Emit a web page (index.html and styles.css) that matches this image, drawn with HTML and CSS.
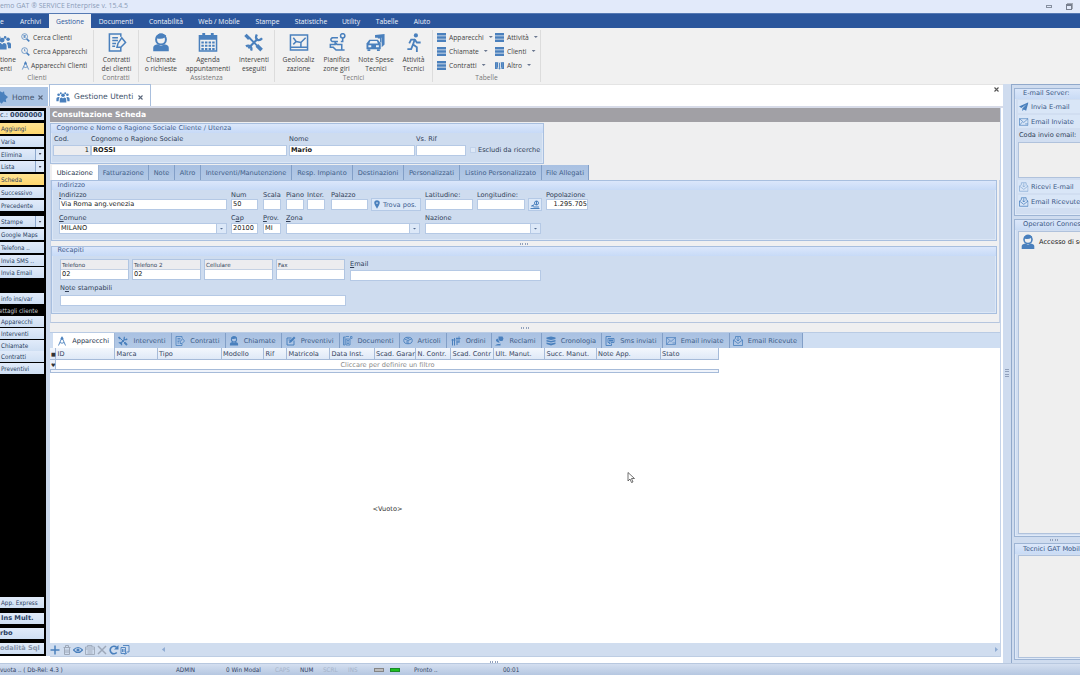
FILE: index.html
```
<!DOCTYPE html>
<html lang="it">
<head>
<meta charset="utf-8">
<title>GAT SERVICE Enterprise</title>
<link rel="stylesheet" href="styles.css">
</head>
<body>
<svg class="defs" aria-hidden="true">
  <symbol id="people" viewBox="0 0 24 20"><g fill="currentColor"><circle cx="12" cy="6" r="3.3"/><circle cx="4" cy="5" r="2.4"/><circle cx="20" cy="5" r="2.4"/><circle cx="8" cy="2.4" r="1.8"/><circle cx="16" cy="2.4" r="1.8"/><path d="M6 19v-5q0-4 4-4l2 2 2-2q4 0 4 4v5zM0 17v-5q0-3 4-3l2 1q-2 2-2 7zM24 17v-5q0-3-4-3l-2 1q2 2 2 7z"/></g></symbol>
  <symbol id="search" viewBox="0 0 20 20"><g fill="none" stroke="currentColor" stroke-width="1.6"><circle cx="8" cy="8" r="6.5"/><path d="M5 6h6M5 9h6M8 5v6"/><path d="M12.500 13l6 5.500" stroke-width="3.5"/></g></symbol>
  <symbol id="search-clock" viewBox="0 0 20 20"><g fill="none" stroke="currentColor" stroke-width="1.6"><circle cx="8" cy="8" r="6.5"/><path d="M8 4v5h2"/><path d="M12.500 13l6 5.500" stroke-width="3.5"/></g></symbol>
  <symbol id="compass" viewBox="0 0 20 20"><g fill="none" stroke="currentColor" stroke-width="1.8"><path d="M10 1v4M9 5L3 19M11 5l6 14M6 13q4 3 8 0"/><circle cx="10" cy="5" r="2" fill="currentColor"/></g></symbol>
  <symbol id="contract" viewBox="0 0 20 20"><g fill="none" stroke="currentColor" stroke-width="1.6"><path d="M14 4V1H2v18h12v-4"/><path d="M5 5h6M5 8h6M5 11h4M5 14h3"/><path d="M10 15l1-4 4-6 4 5-5 5z"/></g></symbol>
  <symbol id="agent" viewBox="0 0 20 22"><circle cx="10" cy="7.500" r="5.700" fill="none" stroke="currentColor" stroke-width="2.300"/><path d="M5 6q5 2 10-1l1-2-4-2.500H8L4 4z" fill="currentColor"/><path d="M1 21v-4q0-3 5-4l4 2 4-2q5 1 5 4v4z" fill="currentColor"/></symbol>
  <symbol id="calendar" viewBox="0 0 20 20"><path d="M1 3h18v16H1z" fill="none" stroke="currentColor" stroke-width="1.600"/><path d="M1 3h18v4H1zM4 0h3v5H4zM13 0h3v5h-3z" fill="currentColor"/><path d="M3 10h14M3 13.500h14M3 17h14" stroke="currentColor" stroke-width="2.200" stroke-dasharray="2.600 1.200"/></symbol>
  <symbol id="tools" viewBox="0 0 20 20"><g fill="none" stroke="currentColor"><path d="M5 5l9 9" stroke-width="2"/><path d="M13 13l5 5" stroke-width="3.800"/><path d="M4 16L14 6" stroke-width="2.400"/><path d="M13 1.500q-2 4 .5 5.500t5-1.500" stroke-width="2.400"/><path d="M1 2l4 4" stroke-width="3.500"/><path d="M7 18.500q1-3-1-4.500t-4.500 0" stroke-width="2.400"/></g></symbol>
  <symbol id="map" viewBox="0 0 20 20"><g fill="none" stroke="currentColor" stroke-width="1.600"><path d="M1 2h18v16H1zM1 15h18M4 5l3 4 5 1 5-5M12 10v5M7 9l-3 3"/></g></symbol>
  <symbol id="route" viewBox="0 0 20 20"><g fill="none" stroke="currentColor" stroke-width="1.600"><circle cx="16" cy="3" r="2.300"/><path d="M16 5v4h-2M11 5H5q-3 2 0 4h6M3 12h5v-2l2 2h5v6H9l-3-3H3zM15 18h3"/></g></symbol>
  <symbol id="car" viewBox="0 0 20 20"><path d="M9 2l10-1v11l-3 3V5H9z" fill="currentColor"/><path d="M12 5h3v5" fill="none" stroke="currentColor" stroke-width="1.500"/><path d="M0 17v-6l3-4h9l3 4v6z" fill="currentColor"/><path d="M4 8.500h7l1 2.500H3zM2 13h3v2H2zM10 13h3v2h-3z" fill="#eef1f6"/><path d="M1 17h3v2H1zM11 17h3v2h-3z" fill="currentColor"/></symbol>
  <symbol id="runner" viewBox="0 0 20 20"><circle cx="12" cy="2.500" r="2.200" fill="currentColor"/><path d="M11 6l-2 6 4 3v5M9 12l-2 5H3M11 7H7l-2 4M11 7l2 3h4" fill="none" stroke="currentColor" stroke-width="1.900"/></symbol>
  <symbol id="db" viewBox="0 0 20 20"><path d="M0 0h20v5.800H0zM0 7.100h20v5.800H0zM0 14.200h20V20H0z" fill="currentColor"/></symbol>
  <symbol id="book" viewBox="0 0 20 20"><path d="M0 3l4-1v14l5 1V3L5 2q3 0 5 2 2-2 5-2l-4 1v14l5-1V2l4 1v15h-8l-2 1-2-1H0z" fill="currentColor"/><path d="M5.500 3v12M14.500 3v12" stroke="currentColor" stroke-width="3"/></symbol>
  <symbol id="doc-edit" viewBox="0 0 20 20"><path d="M16 9v9H2V4h9" fill="none" stroke="currentColor" stroke-width="2"/><path d="M6 14l1-4L16 1l3 3-9 9zM5 7h4v2H5z" fill="currentColor"/></symbol>
  <symbol id="doc" viewBox="0 0 20 20"><path d="M1 2h3v16H1zM6 6h8v12H6zM15 1h3v4h-3z" fill="none" stroke="currentColor" stroke-width="1.600"/><path d="M8 9h4M8 12h4M8 15h4M5 1h7" stroke="currentColor" stroke-width="1.600"/></symbol>
  <symbol id="box" viewBox="0 0 20 20"><ellipse cx="10" cy="9" rx="8.500" ry="6.500" fill="none" stroke="currentColor" stroke-width="1.800"/><path d="M3 6l7 3 7-3M10 9v7M6 12h3M6 3l7 3" fill="none" stroke="currentColor" stroke-width="1.800"/></symbol>
  <symbol id="orders" viewBox="0 0 20 20"><path d="M3 6v13M7 4v15M12 3v15M16 1v12M1 8h8M10 5h9M11 12h6" fill="none" stroke="currentColor" stroke-width="2"/></symbol>
  <symbol id="claim" viewBox="0 0 20 20"><path d="M9 1h8l2 4-2 5h-5l-3-3zM7 5q-4 1-3 5l4 3h4v3H8q-3 0-6 3h11v-3" fill="currentColor"/></symbol>
  <symbol id="stack" viewBox="0 0 20 20"><path d="M1 3l9-2 9 2v3l-9 2-9-2zM1 8l9 2 9-2v3l-9 2-9-2zM1 13l9 2 9-2v3l-9 3-9-3z" fill="currentColor"/></symbol>
  <symbol id="sms" viewBox="0 0 20 20"><path d="M12 1H2v18h11v-4M6 5h12v8h-6l-3 3v-3H6z" fill="none" stroke="currentColor" stroke-width="1.800"/><path d="M8 7h8v4H8z" fill="currentColor"/></symbol>
  <symbol id="mail" viewBox="0 0 20 16"><path d="M1 1h18v14H1zM1 1l9 8 9-8M1 15l6-7M13 12h6" fill="none" stroke="currentColor" stroke-width="1.400"/></symbol>
  <symbol id="mail-open" viewBox="0 0 20 20"><path d="M1 8l4-3V1h10v4l4 3v11H1zM1 8l9 7 9-7M10 2v8M7 7l3 3 3-3" fill="none" stroke="currentColor" stroke-width="1.600"/></symbol>
  <symbol id="plane" viewBox="0 0 20 20"><path d="M20 0L0 9l5 3L16 4 7 13v6l3-4 5 3z" fill="currentColor"/></symbol>
  <symbol id="pin" viewBox="0 0 14 20"><path d="M7 0a6.500 6.500 0 0 1 6.500 6.500Q13 11 7 20 1 11 .5 6.500A6.500 6.500 0 0 1 7 0z" fill="currentColor"/><circle cx="7" cy="6.500" r="2" fill="#d9e6f7"/></symbol>
  <symbol id="geo" viewBox="0 0 20 20"><g fill="none" stroke="currentColor" stroke-width="2"><circle cx="13" cy="6" r="4"/><path d="M9 9l-6 3h5M1 17h18M7 14h11M13 2v8"/></g></symbol>
  <symbol id="gear" viewBox="0 0 14 24"><path d="M0 2l4 2 3-2 1 5 6 5-4 4 1 5-5-1-3 4-3-3z" fill="currentColor"/></symbol>
  <symbol id="x" viewBox="0 0 10 10"><path d="M1 1l8 8M9 1L1 9" stroke="currentColor" stroke-width="2.200"/></symbol>
  <symbol id="cross" viewBox="0 0 20 20"><path d="M2 2l16 16M18 2L2 18" stroke="currentColor" stroke-width="3"/></symbol>
  <symbol id="plus" viewBox="0 0 20 20"><path d="M10 1v18M1 10h18" stroke="currentColor" stroke-width="3"/></symbol>
  <symbol id="trash" viewBox="0 0 20 20"><path d="M3 5h14M7 4V1h6v3M5 6v13h10V6M8 9v7M12 9v7" fill="none" stroke="currentColor" stroke-width="2"/></symbol>
  <symbol id="eye" viewBox="0 0 20 20"><path d="M1 10q9-10 18 0-9 10-18 0z" fill="none" stroke="currentColor" stroke-width="2.400"/><circle cx="10" cy="10" r="3.200" fill="currentColor"/></symbol>
  <symbol id="save" viewBox="0 0 20 20"><path d="M1 4h18v15H1zM5 4V1h9v3M1 8h18M5 12h10M5 16h10" fill="none" stroke="currentColor" stroke-width="1.800"/></symbol>
  <symbol id="refresh" viewBox="0 0 20 20"><path d="M15.500 15A7.500 7.500 0 1 1 15 4.500" fill="none" stroke="currentColor" stroke-width="3.300"/><path d="M19 0v9h-9z" fill="currentColor"/></symbol>
  <symbol id="copy" viewBox="0 0 20 20"><path d="M6 1h12v13h-5M2 5h9v12H2zM5 8v6M8 8v6M14 16l-5 3" fill="none" stroke="currentColor" stroke-width="1.800"/></symbol>
</svg>

<header class="titlebar"><span class="app-title">emo GAT ® SERVICE Enterprise v. 15.4.5</span>
  <span class="win-controls"><i class="win-min"></i><i class="win-restore"></i></span></header>

<nav class="menubar">
  <a class="m-file">e</a><a class="m-archivi">Archivi</a><a class="m-gestione active">Gestione</a><a class="m-documenti">Documenti</a><a class="m-contab">Contabilità</a><a class="m-web">Web / Mobile</a><a class="m-stampe">Stampe</a><a class="m-stat">Statistiche</a><a class="m-utility">Utility</a><a class="m-tabelle">Tabelle</a><a class="m-aiuto">Aiuto</a>
</nav>

<section class="ribbon">
  <div class="group g-clienti">
    <div class="group-body">
      <div class="big b-people"><svg viewBox="9 0 15 20"><use href="#people" width="24" height="20"/></svg><span>tione<br>enti</span></div>
      <div class="small-list">
        <div class="small"><svg><use href="#search"/></svg>Cerca Clienti</div>
        <div class="small"><svg><use href="#search-clock"/></svg>Cerca Apparecchi</div>
        <div class="small tight"><svg><use href="#compass"/></svg>Apparecchi Clienti</div>
      </div>
    </div>
    <div class="group-label">Clienti</div>
  </div>
  <div class="group g-contratti">
    <div class="group-body"><div class="big"><svg><use href="#contract"/></svg><span>Contratti<br>dei clienti</span></div></div>
    <div class="group-label">Contratti</div>
  </div>
  <div class="group g-assistenza">
    <div class="group-body">
      <div class="big b-chiamate"><svg><use href="#agent"/></svg><span>Chiamate<br>o richieste</span></div>
      <div class="big b-agenda"><svg><use href="#calendar"/></svg><span>Agenda<br>appuntamenti</span></div>
      <div class="big b-interv"><svg><use href="#tools"/></svg><span>Interventi<br>eseguiti</span></div>
    </div>
    <div class="group-label">Assistenza</div>
  </div>
  <div class="group g-tecnici">
    <div class="group-body">
      <div class="big b-geo"><svg><use href="#map"/></svg><span>Geolocaliz<br>zazione</span></div>
      <div class="big b-pian"><svg><use href="#route"/></svg><span>Pianifica<br>zone giri</span></div>
      <div class="big b-note"><svg><use href="#car"/></svg><span>Note Spese<br>Tecnici</span></div>
      <div class="big b-att"><svg><use href="#runner"/></svg><span>Attività<br>Tecnici</span></div>
    </div>
    <div class="group-label">Tecnici</div>
  </div>
  <div class="group g-tabelle">
    <div class="group-body">
      <div class="small-list first">
        <div class="small"><svg><use href="#db"/></svg>Apparecchi<i class="caret"></i></div>
        <div class="small"><svg><use href="#db"/></svg>Chiamate<i class="caret"></i></div>
        <div class="small"><svg><use href="#db"/></svg>Contratti<i class="caret"></i></div>
      </div>
      <div class="small-list">
        <div class="small"><svg><use href="#db"/></svg>Attività<i class="caret"></i></div>
        <div class="small"><svg><use href="#db"/></svg>Clienti<i class="caret"></i></div>
        <div class="small"><svg><use href="#book"/></svg>Altro<i class="caret"></i></div>
      </div>
    </div>
    <div class="group-label">Tabelle</div>
  </div>
</section>

<div class="workspace">
  <div class="left-area">
    <div class="doc-tabs">
      <div class="doc-tab home"><svg class="gear"><use href="#gear"/></svg><span>Home</span><svg class="close"><use href="#x"/></svg></div>
      <div class="doc-tab current"><svg class="people"><use href="#people"/></svg><span>Gestione Utenti</span><svg class="close"><use href="#x"/></svg></div>
      <svg class="close-all"><use href="#x"/></svg>
    </div>
    <div class="doc-body">
      <aside class="sidebar">
        <div class="code">c.: <b>0000000</b></div>
        <div class="btn-stack">
          <div class="btn hot">Aggiungi</div><div class="btn">Varia</div><div class="btn split">Elimina<i class="caret"></i></div><div class="btn split">Lista<i class="caret"></i></div><div class="btn hot">Scheda</div><div class="btn">Successivo</div><div class="btn">Precedente</div>
        </div>
        <div class="btn-stack second">
          <div class="btn split">Stampe<i class="caret"></i></div><div class="btn">Google Maps</div><div class="btn">Telefona ..</div><div class="btn">Invia SMS ..</div><div class="btn">Invia Email</div>
        </div>
        <div class="details">
          <div class="btn">info ins/var</div><div class="caption">ettagli cliente</div><div class="btn">Apparecchi</div><div class="btn">Interventi</div><div class="btn">Chiamate</div><div class="btn">Contratti</div><div class="btn">Preventivi</div>
        </div>
        <div class="bottom">
          <div class="btn">App. Express</div><div class="btn bold">Ins Mult.</div><div class="btn bold flush">rbo</div><div class="btn bold flush off">odalità Sql</div>
        </div>
      </aside>

      <main class="main">
        <h1>Consultazione Scheda</h1>
        <div class="form">
          <section class="box identity">
            <div class="box-title">Cognome e Nome o Ragione Sociale Cliente / Utenza</div>
            <div class="fields">
              <label class="field f-cod">Cod.<span class="input gray">1</span></label>
              <label class="field f-surname">Cognome o Ragione Sociale<span class="input strong">ROSSI</span></label>
              <label class="field f-name">Nome<span class="input strong">Mario</span></label>
              <label class="field f-ref">Vs. Rif<span class="input"></span></label>
              <span class="check"><i></i>Escludi da ricerche</span>
            </div>
          </section>
          <nav class="tabs form-tabs">
            <a class="t-ubi active">Ubicazione</a><a class="t-fat">Fatturazione</a><a class="t-not">Note</a><a class="t-alt">Altro</a><a class="t-int">Interventi/Manutenzione</a><a class="t-res">Resp. Impianto</a><a class="t-des">Destinazioni</a><a class="t-per">Personalizzati</a><a class="t-lis">Listino Personalizzato</a><a class="t-fil">File Allegati</a>
          </nav>
          <div class="tab-page">
            <section class="box address">
              <div class="box-title">Indirizzo</div>
              <div class="fields row-a">
                <label class="field f-ind"><span><u>I</u>ndirizzo</span><span class="input">Via Roma ang.venezia</span></label>
                <label class="field f-num">Num<span class="input">50</span></label>
                <label class="field f-scala">Scala<span class="input"></span></label>
                <label class="field f-piano">Piano<span class="input"></span></label>
                <label class="field f-inter">Inter.<span class="input"></span></label>
                <label class="field f-pal">Palazzo<span class="input"></span></label>
                <span class="tool find"><svg><use href="#pin"/></svg>Trova pos.</span>
                <label class="field f-lat">Latitudine:<span class="input"></span></label>
                <label class="field f-lon">Longitudine:<span class="input"></span></label>
                <span class="tool geo"><svg><use href="#geo"/></svg></span>
                <label class="field f-pop">Popolazione<span class="input number">1.295.705</span></label>
              </div>
              <div class="fields row-b">
                <label class="field f-com"><span><u>C</u>omune</span><span class="input combo">MILANO<i class="drop"></i></span></label>
                <label class="field f-cap"><span>C<u>a</u>p</span><span class="input">20100</span></label>
                <label class="field f-prov"><span><u>P</u>rov.</span><span class="input">MI</span></label>
                <label class="field f-zona"><span><u>Z</u>ona</span><span class="input combo"><i class="drop"></i></span></label>
                <label class="field f-naz">Nazione<span class="input combo"><i class="drop"></i></span></label>
              </div>
            </section>
            <div class="splitter"><i class="grip"></i></div>
            <section class="box contacts">
              <div class="box-title">Recapiti</div>
              <div class="fields row-c">
                <div class="phone"><b>Telefono</b><span>02</span></div>
                <div class="phone"><b>Telefono 2</b><span>02</span></div>
                <div class="phone"><b>Cellulare</b><span></span></div>
                <div class="phone"><b>Fax</b><span></span></div>
                <label class="field f-email"><span><u>E</u>mail</span><span class="input"></span></label>
              </div>
              <div class="fields row-d"><label class="field f-notes"><span>N<u>o</u>te stampabili</span><span class="input"></span></label></div>
            </section>
          </div>
          <div class="splitter lower"><i class="grip"></i></div>
        </div>

        <nav class="tabs grid-tabs">
          <a class="s-app active"><svg><use href="#compass"/></svg>Apparecchi</a><a class="s-int"><svg><use href="#tools"/></svg>Interventi</a><a class="s-con"><svg><use href="#contract"/></svg>Contratti</a><a class="s-chi"><svg><use href="#agent"/></svg>Chiamate</a><a class="s-pre"><svg><use href="#doc-edit"/></svg>Preventivi</a><a class="s-doc"><svg><use href="#doc"/></svg>Documenti</a><a class="s-art"><svg><use href="#box"/></svg>Articoli</a><a class="s-ord"><svg><use href="#orders"/></svg>Ordini</a><a class="s-rec"><svg><use href="#claim"/></svg>Reclami</a><a class="s-cro"><svg><use href="#stack"/></svg>Cronologia</a><a class="s-sms"><svg><use href="#sms"/></svg>Sms inviati</a><a class="s-emi"><svg><use href="#mail"/></svg>Email inviate</a><a class="s-emr"><svg><use href="#mail-open"/></svg>Email Ricevute</a>
        </nav>
        <div class="grid">
          <div class="grid-head"><span class="mark">■</span><span>ID</span><span>Marca</span><span>Tipo</span><span>Modello</span><span>Rif</span><span>Matricola</span><span>Data Inst.</span><span>Scad. Garar</span><span>N. Contr.</span><span>Scad. Contr</span><span>Ult. Manut.</span><span>Succ. Manut.</span><span>Note App.</span><span>Stato</span></div>
          <div class="grid-filter"><span class="mark">♥</span><span class="hint">Cliccare per definire un filtro</span></div>
          <div class="grid-line"></div>
          <div class="grid-empty">&lt;Vuoto&gt;</div>
          <svg class="cursor" viewBox="0 0 14 22"><path d="M1 1v17l4-4 3 7 3-1-3-7h6z" fill="#fff" stroke="#444" stroke-width="1.500"/></svg>
        </div>
        <div class="navigator">
          <svg><use href="#plus"/></svg><svg class="off"><use href="#trash"/></svg><svg><use href="#eye"/></svg><svg class="off"><use href="#save"/></svg><svg class="off"><use href="#cross"/></svg><svg><use href="#refresh"/></svg><svg><use href="#copy"/></svg>
          <i class="arrow-left"></i><i class="arrow-right"></i>
        </div>
      </main>
    </div>
    <div class="under"><i class="grip"></i></div>
  </div>

  <div class="vsplit"><i></i></div>
  <aside class="right-dock">
    <section class="panel mailbox">
      <div class="panel-title">E-mail Server:</div>
      <div class="mail-btn"><svg><use href="#plane"/></svg>Invia E-mail</div>
      <div class="mail-btn"><svg><use href="#mail"/></svg>Email Inviate</div>
      <div class="queue-label">Coda invio email:</div>
      <div class="well queue"></div>
      <div class="mail-btn"><svg class="pale"><use href="#mail-open"/></svg>Ricevi E-mail</div>
      <div class="mail-btn"><svg><use href="#mail-open"/></svg>Email Ricevute</div>
    </section>
    <section class="panel operators">
      <div class="panel-title">Operatori Connessi</div>
      <div class="well"><div class="operator"><svg><use href="#agent"/></svg>Accesso di servizio</div></div>
    </section>
    <div class="panel-grip"><i class="grip"></i></div>
    <section class="panel technicians">
      <div class="panel-title">Tecnici GAT Mobile</div>
      <div class="well"></div>
    </section>
  </aside>
</div>

<footer class="status">
  <span class="st-db">vuota .. ( Db-Rel: 4.3 )</span><span class="st-user">ADMIN</span><span class="st-win">0 Win Modal</span><span class="st-caps off">CAPS</span><span class="st-num">NUM</span><span class="st-scrl off">SCRL</span><span class="st-ins off">INS</span><i class="led"></i><i class="led on"></i><span class="st-ready">Pronto ..</span><span class="st-time">00:01</span>
</footer>
</body>
</html>
```
FILE: styles.css
```
* { box-sizing: border-box; }
body {
  margin: 0; width: 1080px; height: 675px; overflow: hidden;
  display: flex; flex-direction: column;
  font: 6.6px/8px "DejaVu Sans", Verdana, sans-serif;
  color: #303e57; background: #fff; white-space: nowrap;
}
.defs { display: none; }
svg { flex: none; color: #4a80bd; }
i { font-style: normal; flex: none; }

/* Title and menu */
.titlebar { height: 13px; flex: none; background: #e2eafa; display: flex; justify-content: space-between; align-items: center; font: 6.900px/10px "Open Sans", sans-serif; color: #8b9cb8; padding-right: 8px; }
.app-title { margin-top: -2px; }
.win-controls { display: flex; gap: 14px; align-items: center; }
.win-min { width: 6px; height: 3px; border: 1px solid #8790a0; }
.win-restore { width: 6px; height: 6px; border: 1px solid #777f8e; border-top-width: 2px; box-shadow: 1px -1px 0 #a2a9b5; }
.menubar { height: 15px; flex: none; background: #2b569c; border-top: 1px solid #5579b3; display: flex; font: 6.750px/16px "Open Sans", sans-serif; color: #eef3fb; }
.menubar a { text-align: center; flex: none; height: 14px; }
.menubar .active { background: #f2f2f3; color: #2b569c; }
.m-file { width: 12px; padding-right: 8px; }
.m-archivi { width: 37px; } .m-gestione { width: 42px; } .m-documenti { width: 50px; } .m-contab { width: 50px; } .m-web { width: 56px; }
.m-stampe { width: 41px; } .m-stat { width: 46px; } .m-utility { width: 34px; } .m-tabelle { width: 38px; } .m-aiuto { width: 32px; }

/* Ribbon */
.ribbon { height: 56px; flex: none; background: #f1f1f1; display: flex; padding-top: 2px; font: 6.700px/9px "Open Sans", sans-serif; color: #444; }
.group { border-right: 1px solid #dcdcdc; height: 52px; display: flex; flex-direction: column; flex: none; }
.group-body { display: flex; height: 44px; }
.group-label { text-align: center; color: #777; }
.g-clienti { width: 94px; } .g-contratti { width: 45px; } .g-assistenza { width: 136px; } .g-tecnici { width: 158px; } .g-tabelle { width: 108px; }
.g-clienti .group-label { width: 74px; }
.big { display: flex; flex-direction: column; align-items: center; text-align: center; width: 45px; flex: none; padding-top: 3px; }
.big svg { width: 20px; height: 19px; margin-bottom: 3px; }
.b-people { width: 20px; align-items: flex-start; text-align: left; }
.b-people svg { width: 11px; height: 16px; margin: 2px 0 4px; }
.b-chiamate { width: 44px; } .b-agenda { width: 50px; } .b-interv { width: 42px; }
.b-geo { width: 45px; margin-left: 1px; } .b-pian { width: 31px; } .b-note { width: 48px; } .b-att { width: 27px; }
.small-list { display: flex; flex-direction: column; }
.small { height: 14px; display: flex; align-items: center; gap: 3px; padding-left: 1px; }
.small svg { width: 9px; height: 9px; }
.small.tight { gap: 1px; }
.caret { width: 4px; height: 2px; margin-left: 2px; background: #6b7890; clip-path: polygon(0 0, 100% 0, 50% 100%); }
.g-tabelle .small-list.first { width: 58px; margin-left: 3px; }

/* Work area */
.workspace { flex: 1; min-height: 0; display: flex; }
.left-area { width: 1003px; display: flex; flex-direction: column; flex: none; }
.doc-tabs { height: 22px; flex: none; display: flex; border-top: 1px solid #e4e4e4; font-size: 7.600px; color: #45556e; align-items: flex-end; }
.doc-tab { display: flex; align-items: center; }
.home { width: 48px; height: 19px; background: #abc4e4; gap: 4px; padding-top: 2px; }
.home .gear { width: 8px; height: 14px; margin-top: -2px; }
.current { width: 102px; height: 22px; margin-left: 1px; border: 1px solid #a9bfdd; border-bottom: 0; background: #fff; padding: 3px 0 0 6px; gap: 4px; }
.current .people { width: 14px; height: 11px; }
.current .close { margin-left: 1px; }
.close { width: 5px; height: 5px; color: #59667b; }
.close-all { width: 5px; height: 5px; color: #555; margin: 0 4px 14px auto; }
.doc-body { height: 551px; flex: none; display: flex; border-top: 2px solid #d7dbe8; }
.sidebar { width: 46px; height: 548px; background: #000; margin-right: 4px; box-shadow: 4px 0 0 #ccd9ed; font: 6.300px/11px "DejaVu Sans Condensed", "DejaVu Sans", sans-serif; color: #293d60; padding-top: 3px; display: flex; flex-direction: column; }
.sidebar .code { height: 9px; flex: none; line-height: 9px; width: 44px; background: #d9e6f7; font-family: "DejaVu Sans", sans-serif; font-size: 6.600px; text-align: right; padding-right: 3px; margin-bottom: 3px; }
.btn-stack { display: flex; flex-direction: column; gap: 1.800px; }
.btn { height: 11px; width: 44px; background: linear-gradient(#e1ebfa, #cfdff3); padding-left: 1px; display: flex; justify-content: space-between; flex: none; }
.btn.hot { background: linear-gradient(#ffe391, #ffd76e); }
.split .caret { margin: 0; width: 9px; height: 11px; border-left: 1px solid #8da8cd; background: #dce8f8; clip-path: none; display: grid; place-items: center; }
.split .caret::after { content: ""; width: 3px; height: 2px; background: #445; clip-path: polygon(0 0, 100% 0, 50% 100%); }
.second { margin-top: 5.500px; }
.details { margin-top: 14.500px; display: flex; flex-direction: column; gap: .7px; }
.caption { height: 11px; color: #c8cdd6; margin-left: -1px; }
.bottom { margin-top: auto; display: flex; flex-direction: column; gap: 4.200px; padding-bottom: 2px; }
.bold { font-weight: bold; font-family: "DejaVu Sans", sans-serif; font-size: 6.600px; }
.bold.flush { padding-left: 0; }
.btn.off { color: #8794aa; }
.under { flex: 1; position: relative; }
.under .grip { position: absolute; left: 490px; top: 4px; }
.grip { width: 9px; height: 2px; background: repeating-linear-gradient(90deg, #91a1bc 0 1px, transparent 1px 2.300px); }

/* Form */
.main { width: 951px; display: flex; flex-direction: column; border-right: 1px solid #c5d3e8; }
h1 { margin: 0; height: 14px; flex: none; background: #a1a0a5; color: #fff; font: bold 7.600px/14px "DejaVu Sans", sans-serif; padding-left: 2px; }
.form { height: 210px; background: #efeff0; flex: none; display: flex; flex-direction: column; }
.box { background: #cedcef; border: 1px solid #a8bfdf; box-shadow: inset 0 0 0 1px #dce7f6; flex: none; }
.box-title { height: 9px; line-height: 8px; padding-left: 5.500px; color: #3f5d8d; background: linear-gradient(#dbe7fb, #c7daf7); }
.identity { width: 494px; height: 41px; margin-top: 1px; }
.identity .box-title { line-height: 9px; }
.fields { display: flex; align-items: flex-start; }
.identity .fields { padding: 2px 0 0 3px; }
.field { display: flex; flex-direction: column; flex: none; }
.input { height: 11px; line-height: 9px; border: 1px solid #b5c9e5; background: #fff; display: block; padding-left: 1px; color: #222; }
.identity .input { margin-top: 2px; }
.gray { background: #ecedf0; text-align: right; padding-right: 1px; }
.strong { font-weight: bold; }
.number { text-align: right; padding-right: 0; }
.f-cod { width: 37px; } .f-cod .input { margin-left: -1px; }
.f-surname { width: 196px; margin-right: 2px; } .f-name { width: 126px; margin-right: 1px; } .f-ref { width: 50px; margin-right: 4px; }
.check { display: flex; align-items: center; gap: 2px; margin-top: 11px; }
.check i { width: 6px; height: 6px; border: 1px solid #c1d2ea; background: #dde8f6; }

.tabs { display: flex; flex: none; color: #405d87; }
.tabs a { border-right: 1px solid #829fc7; background: linear-gradient(#a9c1e2, #b3c9e6); text-align: center; flex: none; }
.tabs a.active { background: #fff; color: #26344d; border-right-color: #9fb6d6; }
.form-tabs { height: 15px; margin-top: 1px; line-height: 16px; padding-left: 2px; }
.t-ubi { width: 46.500px; } .t-fat { width: 50.500px; } .t-not { width: 26px; } .t-alt { width: 26px; } .t-int { width: 91px; } .t-res { width: 61px; } .t-des { width: 51px; } .t-per { width: 56px; } .t-lis { width: 82px; } .t-fil { width: 47px; }
.tab-page { height: 144px; background: #f0f0f1; border: 1px solid #c4d1e6; border-top: 0; border-bottom-color: #b5c5de; display: flex; flex-direction: column; padding-right: 2px; }
.address { height: 61px; }
.row-a { padding: 1px 0 0 7px; height: 23px; }
.row-b { padding: 1px 0 0 7px; }
.f-ind { width: 168px; margin-right: 4px; } .f-num { width: 27px; margin-right: 5px; } .f-scala { width: 18px; margin-right: 5px; } .f-piano { width: 18px; margin-right: 3px; } .f-inter { width: 18px; margin-right: 6px; } .f-pal { width: 37px; margin-right: 3px; }
.f-lat { width: 48px; margin-right: 4px; } .f-lon { width: 48px; margin-right: 3px; } .f-pop { width: 42px; }
.tool { border: 1px solid #b4c9e6; background: #dce8f8; height: 13px; margin-top: 7px; display: flex; align-items: center; color: #3d5e91; flex: none; }
.find { width: 50px; gap: 3px; padding-left: 2px; margin-right: 4px; }
.find svg { width: 6px; height: 9px; }
.geo { width: 14px; margin-right: 4px; justify-content: center; }
.geo svg { width: 10px; height: 10px; }
.row-b .input { margin-top: 1px; }
.f-com { width: 168px; margin-right: 4px; } .f-cap { width: 27px; margin-right: 5px; } .f-prov { width: 18px; margin-right: 5px; } .f-zona { width: 134px; margin-right: 5px; } .f-naz { width: 116px; }
.input.combo { display: flex; justify-content: space-between; padding-right: 0; }
.drop { width: 10px; margin-left: auto; border-left: 1px solid #b5c9e5; background: #dce8f8; display: grid; place-items: center; }
.drop::after { content: ""; width: 4px; height: 2px; background: #536b90; clip-path: polygon(0 0, 100% 0, 50% 100%); }
.splitter { height: 5px; flex: none; display: grid; place-items: center; }
.splitter.lower { height: 9px; }
.contacts { height: 68px; }
.contacts .box-title { line-height: 7px; }
.row-c { padding: 3px 0 0 8px; height: 28px; }
.phone { width: 69px; margin-right: 3px; height: 21px; border: 1px solid #b0c5e2; background: #fff; display: flex; flex-direction: column; flex: none; padding: 0 1px; }
.phone b { height: 10px; line-height: 10px; font-size: 5.600px; font-weight: normal; background: #ececef; margin: 0 -1px; padding-left: 1px; border-bottom: 1px solid #c5d1e3; }
.phone span { line-height: 8px; color: #222; }
.f-email { width: 191px; margin: 1px 0 0 2px; } .f-email .input { margin-top: 2px; }
.row-d { padding: 0 0 0 8px; } .f-notes { width: 286px; } .f-notes .input { margin-top: 3px; }

/* Lower grid */
.grid-tabs { height: 16px; background: #cfdef2; padding-left: 3px; border-top: 1px solid #b9cbe4; }
.grid-tabs a { display: flex; align-items: center; justify-content: flex-end; padding-right: 5px; gap: 5px; }
.grid-tabs svg { width: 10px; height: 10px; margin-right: auto; margin-left: 5px; }
.s-app { width: 62px; } .s-int { width: 56.500px; } .s-con { width: 54px; } .s-chi { width: 56px; } .s-pre { width: 58px; } .s-doc { width: 60px; } .s-art { width: 47px; } .s-ord { width: 45px; } .s-rec { width: 50px; } .s-cro { width: 60.500px; } .s-sms { width: 60.500px; } .s-emi { width: 67px; } .s-emr { width: 73.500px; }
.grid { flex: 1; background: #fff; position: relative; }
.grid-head { width: 669px; height: 12px; display: grid; grid-template-columns: 6px 59px 42.500px 64px 42.500px 23px 43px 44.500px 41.500px 35px 43px 51px 51.500px 64px 58.500px; line-height: 12px; border-bottom: 1px solid #a6bbd9; background: linear-gradient(#f3f7fd, #dfe9f7); }
.grid-head span { border-right: 1px solid #a6bbd9; padding-left: 1.500px; color: #34435c; height: 11px; }
.grid-head .mark, .grid-filter .mark { font-size: 5px; padding-left: 1px; color: #333; }
.grid-filter { height: 9px; width: 669px; display: flex; line-height: 10px; }
.grid-filter .mark { width: 6px; border-right: 1px solid #a6bbd9; background: #eaf1fb; }
.hint { flex: 1; text-align: center; color: #888; }
.grid-line { width: 669px; height: 4px; border: 1px solid #a6bbd9; background: #f0f4fb; }
.grid-empty { width: 675px; text-align: center; margin-top: 132px; color: #333; }
.cursor { position: absolute; left: 577px; top: 124px; width: 8px; height: 11px; }
.navigator { height: 14px; flex: none; background: #d0ddef; display: flex; align-items: center; gap: 2px; padding: 0 2px 0 0; border-bottom: 1px solid #bdcde3; }
.navigator svg { width: 10px; height: 10px; margin-right: -.3px; }
.navigator .off { color: #9da8b9; }
.arrow-left, .arrow-right { width: 3px; height: 5px; background: #8eabd2; clip-path: polygon(100% 0, 100% 100%, 0 50%); }
.arrow-left { margin-left: 30px; }
.arrow-right { margin-left: auto; clip-path: polygon(0 0, 100% 50%, 0 100%); }

/* Right column */
.vsplit { width: 8px; background: #cfdcef; display: grid; place-items: center; flex: none; }
.vsplit i { width: 4px; height: 9px; background: repeating-linear-gradient(#91a1bc 0 1px, transparent 1px 2.300px); }
.right-dock { width: 69px; overflow: hidden; background: #cfdcef; border-left: 1px solid #91a9cb; border-top: 1px solid #91a9cb; padding: 3px 0 2px 2px; display: flex; flex-direction: column; flex: none; }
.panel { width: 90px; border: 1px solid #9db4d4; background: #d1def1; flex: none; box-shadow: inset 0 0 0 1px #dfe9f7; }
.panel-title { height: 10px; line-height: 9px; padding-left: 8px; color: #3b5886; background: linear-gradient(#dbe7fa, #c9dbf5); }
.mailbox { height: 128px; margin-bottom: 3px; }
.mail-btn { height: 13px; margin: 1px 0 2px 3px; display: flex; align-items: center; gap: 2.500px; padding-left: 1px; background: #d9e6f7; color: #3b5886; }
.mail-btn svg { width: 9.500px; height: 10px; }
.mail-btn .pale { opacity: .55; }
.queue-label { margin: 3px 0 3px 4px; color: #303e57; }
.well { background: #efefef; border: 1px solid #b0c2dc; margin-left: 3px; }
.queue { height: 36px; margin-bottom: 2px; }
.operators { height: 318px; }
.operators .well { height: 303px; margin-top: 1px; }
.operator { display: flex; align-items: center; gap: 4px; color: #222; padding: 1px 0 0 2px; }
.operator svg { width: 14px; height: 18px; }
.panel-grip { height: 6px; display: flex; align-items: center; padding-left: 36px; }
.technicians { height: 117px; }
.technicians .panel-title { line-height: 10px; }
.technicians .well { height: 103px; margin-top: 1px; }

/* Status bar */
.status { height: 12px; flex: none; background: linear-gradient(#d4dff0, #b5c7e1); border-top: 1px solid #b8c8df; font: 6.300px/12px "DejaVu Sans Condensed", sans-serif; color: #30415f; display: flex; }
.status span { flex: none; }
.status .off { color: #a5b3c9; }
.st-db { width: 176px; } .st-user { width: 50px; } .st-win { width: 49px; } .st-caps { width: 25px; } .st-num { width: 23px; } .st-scrl { width: 25px; } .st-ins { width: 26px; } .st-ready { width: 89px; margin-left: 9px; }
.led { width: 10px; height: 4px; margin: 4px 6px 0 0; border: 1px solid #858585; background: #bcbcbc; }
.led.on { background: #1fc01f; border-color: #198a28; margin-right: 5px; }
```
